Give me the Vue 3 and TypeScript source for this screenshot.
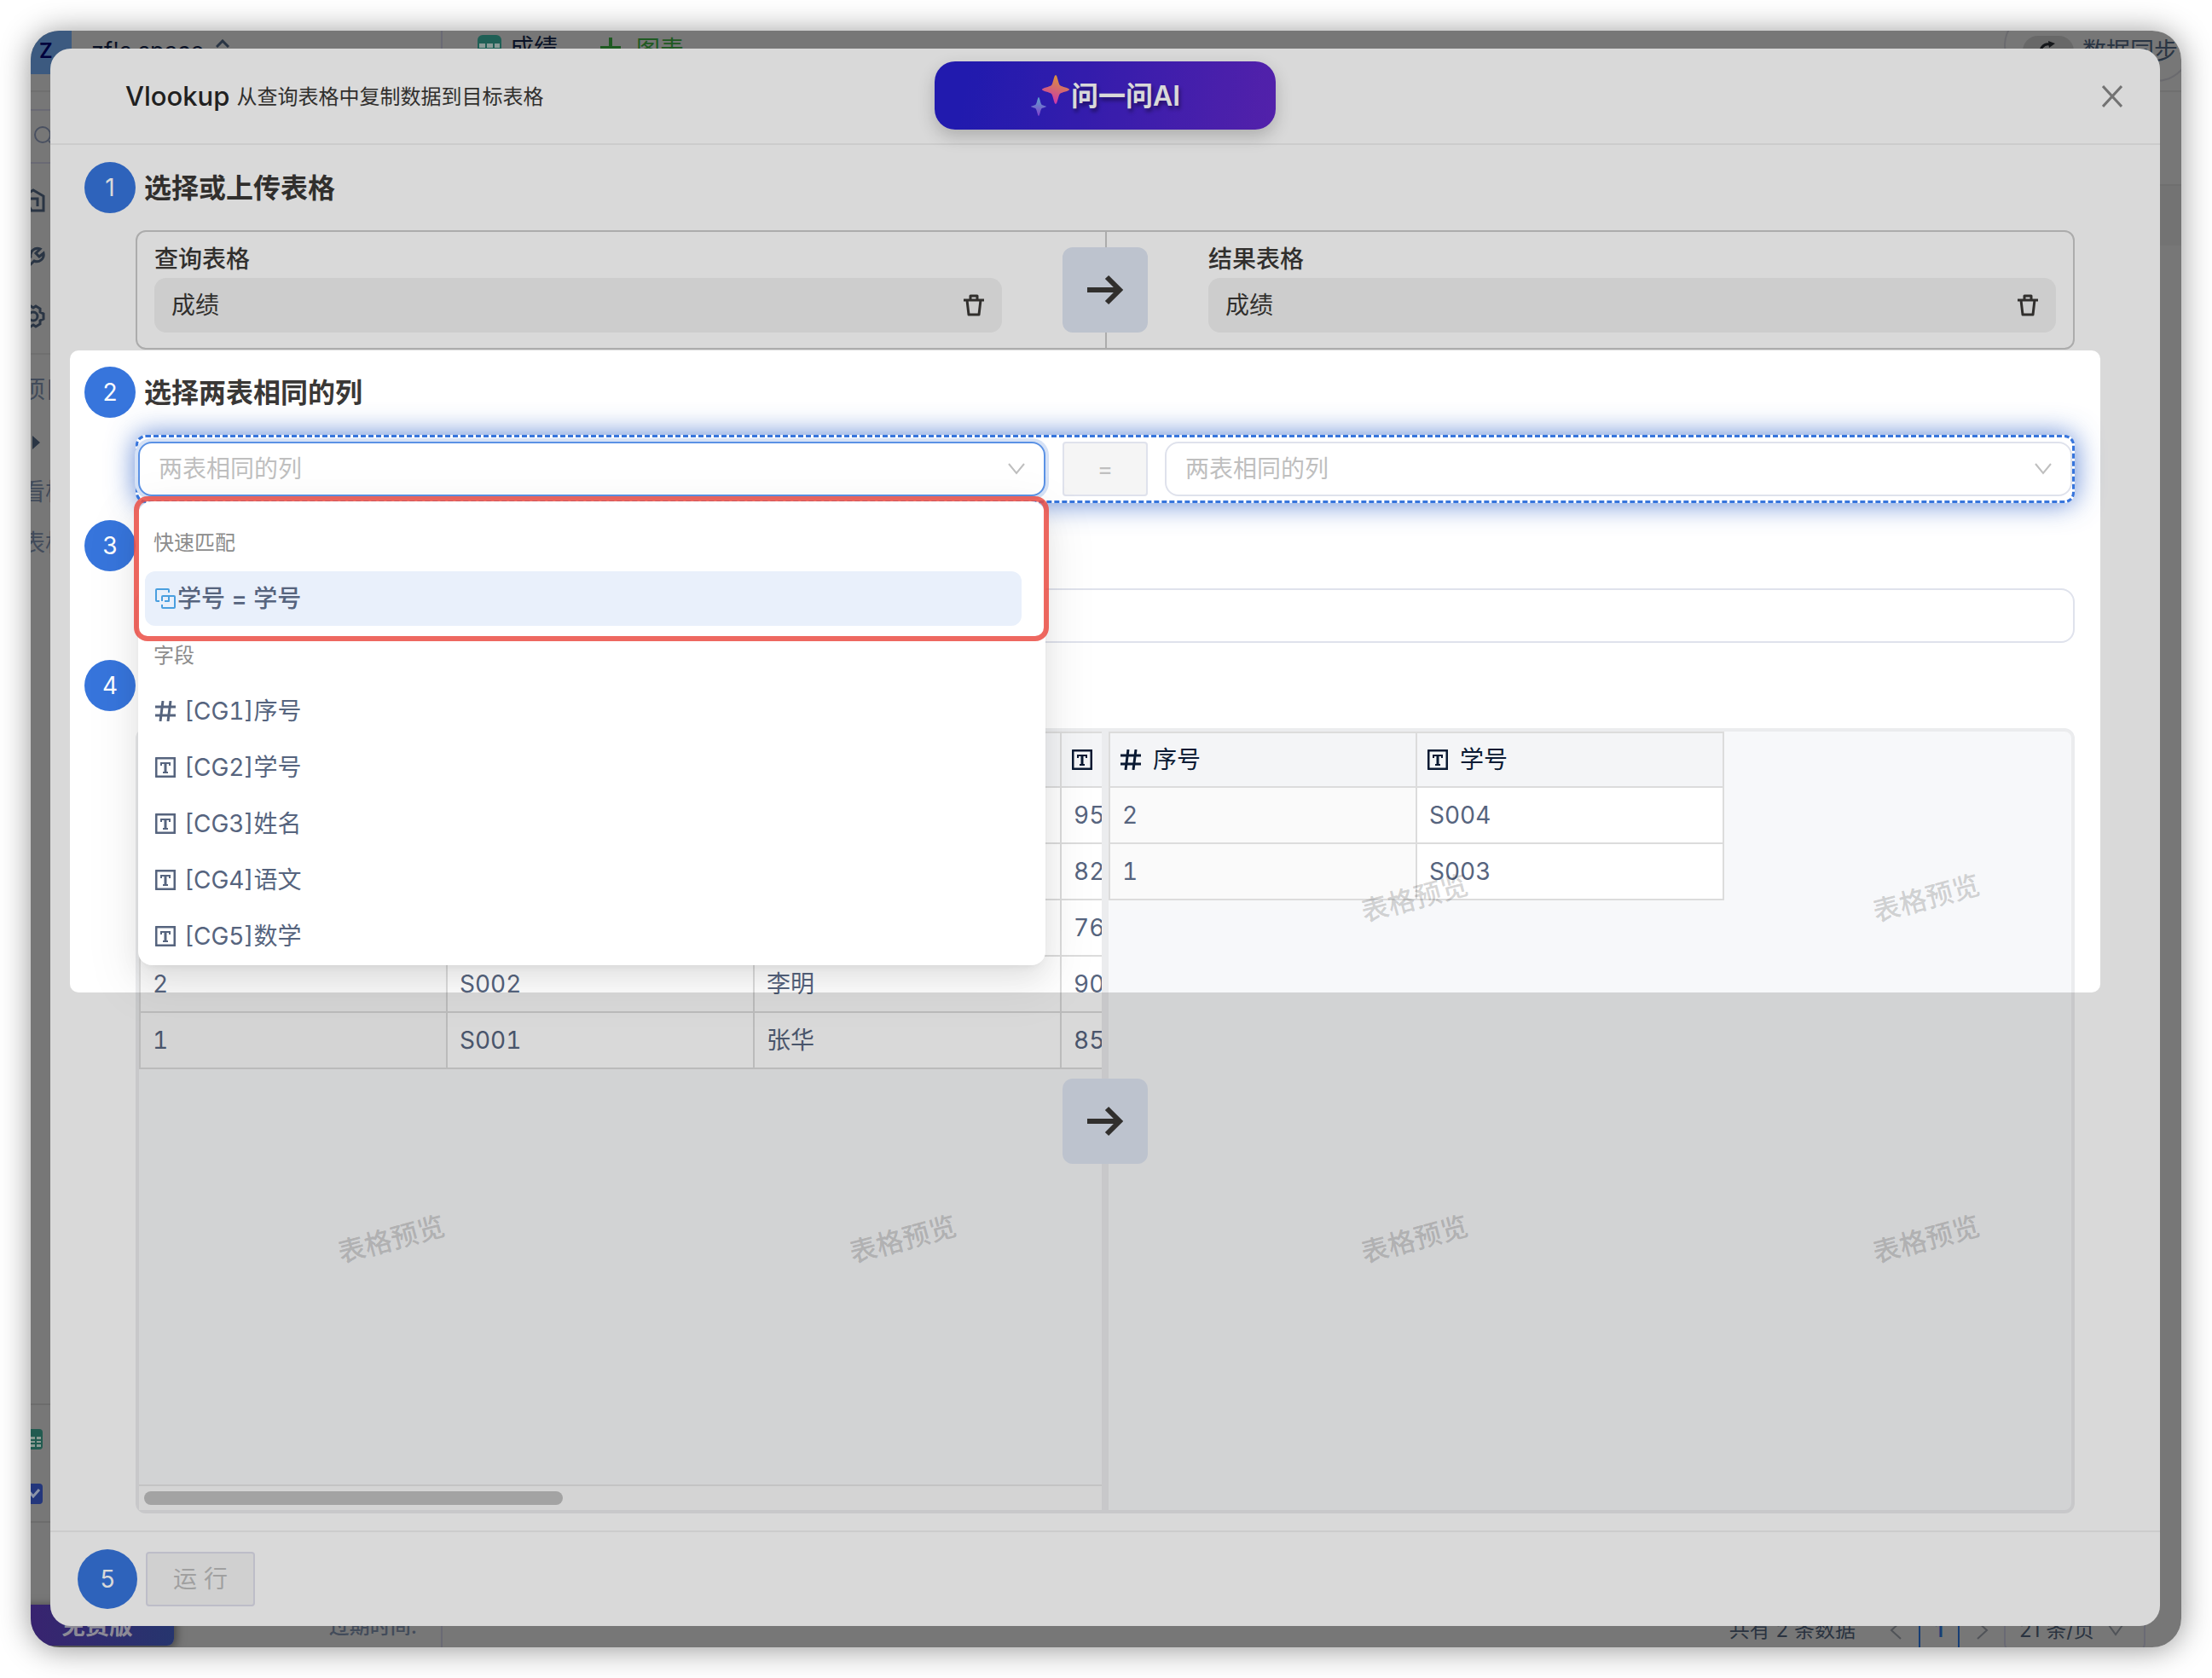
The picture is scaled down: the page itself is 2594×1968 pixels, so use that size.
<script setup lang="ts">
import { ref } from 'vue'

interface Field {
  id: string
  name: string
  kind: 'number' | 'text'
}

const fields: Field[] = [
  { id: 'CG1', name: '序号', kind: 'number' },
  { id: 'CG2', name: '学号', kind: 'text' },
  { id: 'CG3', name: '姓名', kind: 'text' },
  { id: 'CG4', name: '语文', kind: 'text' },
  { id: 'CG5', name: '数学', kind: 'text' },
]

const sourceRows: string[][] = [
  ['', '', '', '95'],
  ['', '', '', '82'],
  ['', '', '', '76'],
  ['2', 'S002', '李明', '90'],
  ['1', 'S001', '张华', '85'],
]

const targetRows: string[][] = [
  ['2', 'S004'],
  ['1', 'S003'],
]

const tables = [
  { label: '查询表格', value: '成绩' },
  { label: '结果表格', value: '成绩' },
]

const watermarks = [1, 2, 3, 4, 5, 6, 7, 8]
const target = ref('')
</script>

<template>
  <div class="stage">
    <div class="app">
      <div class="shell">
        <aside class="side">
          <div class="brand">
            <span class="logo">Z</span>
            <span class="space">zf's space</span>
            <svg class="caret" width="16" height="10" viewBox="0 0 16 10"><path d="M1 9 8 2l7 7" fill="none" stroke="#2a3544" stroke-width="3" /></svg>
          </div>
          <div class="search">
            <svg width="28" height="28" viewBox="0 0 28 28"><circle cx="12" cy="12" r="9" /><path d="m19 19 7 7" /></svg>
          </div>
          <nav class="tools">
            <svg width="28" height="28" viewBox="0 0 28 28"><path d="M2 26h5V12h12v9M12 26h14V9L14 2 2 9z" /></svg>
            <svg width="28" height="28" viewBox="0 0 28 28"><path d="M22 3a8 8 0 0 0-11 9L2 22l4 4 9-9a8 8 0 0 0 11-9l-5 4-4-4z" /></svg>
            <svg width="28" height="28" viewBox="0 0 28 28"><path d="m11 2 3 2 3-2 5 3v4l4 2v6l-4 2v4l-5 3-3-2-3 2-5-3v-4l-4-2v-6l4-2V5z" /><circle cx="14" cy="14" r="5" /></svg>
          </nav>
          <div class="tree">
            <span>项目</span>
            <span class="tri"></span>
            <span>看板</span>
            <span>表格</span>
          </div>
          <div class="apps">
            <span class="tile sheet"><svg width="26" height="24" viewBox="0 0 26 24"><path d="M3 9h21v12H3z" fill="#8a9a92" /><path d="M3 13h21M3 17h21M11 9v12M18 9v12" stroke="#225b50" stroke-width="2" /></svg></span>
            <span class="tile chart"><svg width="26" height="24" viewBox="0 0 26 24"><path d="m4 12 5-4 6 7 7-8" fill="none" stroke="#8b93a8" stroke-width="3" /></svg></span>
          </div>
          <div class="plan">
            <span class="badge">免费版</span>
            <span class="expire">过期时间:</span>
          </div>
        </aside>
        <main class="main">
          <div class="tabs">
            <svg class="tabicon" width="28" height="28" viewBox="0 0 28 28"><rect width="28" height="28" rx="6" fill="#1f5f55" /><path d="M2 10h7v5H2zM11 10h7v5h-7zM20 10h6v5h-6zM2 17h7v4H2zM11 17h7v4h-7zM20 17h6v4h-6z" fill="#8a9a96" /></svg>
            <span class="tab">成绩</span>
            <svg class="plus" width="28" height="28" viewBox="0 0 28 28"><path d="M14 2v24M2 14h24" stroke="#1f5a22" stroke-width="4" /></svg>
            <span class="newchart">图表</span>
            <div class="sync">
              <span class="spin"><svg width="24" height="24" viewBox="0 0 24 24"><path d="M4 17A9 9 0 0 1 14 4M21 11a9 9 0 0 1-9 10" fill="none" stroke="#16181b" stroke-width="3" /><path d="m12 0 8 3-7 5z" fill="#16181b" /></svg></span>
              <span>数据同步</span>
            </div>
          </div>
          <div class="toolbar"></div>
          <div class="subbar"></div>
          <div class="pager">
            <span class="total">共有 2 条数据</span>
            <svg width="14" height="24" viewBox="0 0 14 24"><path d="M13 2 2 12l11 10" fill="none" stroke="#505358" stroke-width="2" /></svg>
            <span class="page">1</span>
            <svg width="14" height="24" viewBox="0 0 14 24"><path d="m1 2 11 10L1 22" fill="none" stroke="#505358" stroke-width="2" /></svg>
            <span class="size">21 条/页<svg width="18" height="14" viewBox="0 0 18 14"><path d="m1 1 8 11 8-11" fill="none" stroke="#505358" stroke-width="2" /></svg></span>
          </div>
        </main>
      </div>

      <section class="modal" role="dialog" aria-labelledby="dialog-title">
        <header class="head">
          <h1 id="dialog-title">Vlookup</h1>
          <p>从查询表格中复制数据到目标表格</p>
          <button type="button" class="ask">
            <svg width="48" height="50" viewBox="0 0 48 50">
              <defs>
                <linearGradient id="warm" x1="0" y1="1" x2=".3" y2="0"><stop offset="0" stop-color="#ef2fe0" /><stop offset="1" stop-color="#ffa84c" /></linearGradient>
                <linearGradient id="cool" x1="0" y1="1" x2="0" y2="0"><stop offset="0" stop-color="#9a4df0" /><stop offset="1" stop-color="#6ec0f0" /></linearGradient>
              </defs>
              <path d="M30 1c2 0 3 10 5 12s11 3 11 5-9 3-11 5-3 12-5 12-3-10-5-12-11-3-11-5 9-3 11-5 3-12 5-12z" fill="url(#warm)" />
              <path d="M10 27c1 0 2 6 3 8s6 2 6 3-5 1-6 3-2 8-3 8-2-6-3-8-6-2-6-3 5-1 6-3 2-8 3-8z" fill="url(#cool)" />
            </svg>
            <span>问一问AI</span>
          </button>
          <button type="button" class="close" aria-label="关闭">
            <svg width="24" height="26" viewBox="0 0 24 26"><path d="m1 1 22 24M23 1 1 25" stroke="#888" stroke-width="3" /></svg>
          </button>
        </header>

        <div class="body">
          <div class="step"><span class="num">1</span><h2>选择或上传表格</h2></div>
          <div class="pick">
            <div v-for="(t, i) in tables" :key="i" class="side-pick">
              <h3>{{ t.label }}</h3>
              <div class="file">
                <span>{{ t.value }}</span>
                <button type="button" aria-label="删除">
                  <svg width="26" height="26" viewBox="0 0 26 26"><path d="M1 7h24M9 7V2h8v5M5 7l2 17h12l2-17" fill="none" stroke="#3a3836" stroke-width="3" stroke-linejoin="round" /></svg>
                </button>
              </div>
            </div>
            <div class="arrow">
              <svg width="44" height="36" viewBox="0 0 44 36"><path d="M1 18h38M24 3l15 15-15 15" fill="none" stroke="#3a3836" stroke-width="6" /></svg>
            </div>
          </div>

          <div class="step"><span class="num">2</span><h2>选择两表相同的列</h2></div>
          <div class="match">
            <div class="combo open">
              <select aria-label="查询表格列"><option>两表相同的列</option></select>
              <svg width="20" height="14" viewBox="0 0 20 14"><path d="m1 1 9 11 9-11" fill="none" stroke="#bfbfbf" stroke-width="2" /></svg>
              <div class="menu">
                <div class="quick"></div>
                <ul role="listbox" aria-label="字段列表">
                  <li class="group" role="presentation">快速匹配</li>
                  <li class="opt active" role="option" aria-selected="true">
                    <svg width="24" height="24" viewBox="0 0 24 24" fill="none" stroke="#4a9fdf" stroke-width="2" stroke-linejoin="round"><path d="M16 5V2a1 1 0 0 0-1-1H2a1 1 0 0 0-1 1v12a1 1 0 0 0 1 1h3M8 19v3a1 1 0 0 0 1 1h13a1 1 0 0 0 1-1V10a1 1 0 0 0-1-1H9a1 1 0 0 0-1 1v5M16 9v6h-5" /></svg>
                    <b>学号 = 学号</b>
                  </li>
                  <li class="group" role="presentation">字段</li>
                  <li v-for="f in fields" :key="f.id" class="opt" role="option">
                    <svg class="kind" width="24" height="24" viewBox="0 0 24 24" fill="none" stroke="currentColor" stroke-width="3">
                      <path v-if="f.kind === 'number'" d="M9 0 6 24M18 0l-3 24M0 7h24M0 17h24" />
                      <template v-else><rect x="1" y="1" width="22" height="22" rx="1" /><path d="M7 10V7h10v3M9 18h6" stroke-width="2" /><path d="M12 7v10" /></template>
                    </svg>
                    <span>[{{ f.id }}]{{ f.name }}</span>
                  </li>
                </ul>
              </div>
            </div>
            <span class="equals">=</span>
            <div class="combo">
              <select aria-label="结果表格列"><option>两表相同的列</option></select>
              <svg width="20" height="14" viewBox="0 0 20 14"><path d="m1 1 9 11 9-11" fill="none" stroke="#bfbfbf" stroke-width="2" /></svg>
            </div>
          </div>

          <div class="step"><span class="num">3</span></div>
          <input v-model="target" class="target" type="text" aria-label="目标列" />

          <div class="step"><span class="num">4</span></div>
          <div class="preview">
            <div class="pane">
              <div class="scroll">
                <table class="wide">
                  <thead>
                    <tr>
                      <th></th><th></th><th></th>
                      <th><div><svg width="24" height="24" viewBox="0 0 24 24" fill="none" stroke="currentColor" stroke-width="3"><rect x="1" y="1" width="22" height="22" rx="1" /><path d="M7 10V7h10v3M9 18h6" stroke-width="2" /><path d="M12 7v10" /></svg></div></th>
                    </tr>
                  </thead>
                  <tbody>
                    <tr v-for="(r, i) in sourceRows" :key="i"><td v-for="(c, j) in r" :key="j">{{ c }}</td></tr>
                  </tbody>
                </table>
              </div>
              <div class="bar"><div class="thumb"></div></div>
            </div>
            <div class="gutter"></div>
            <div class="pane">
              <table>
                <thead>
                  <tr>
                    <th><div><svg width="24" height="24" viewBox="0 0 24 24" fill="none" stroke="currentColor" stroke-width="3"><path d="M9 0 6 24M18 0l-3 24M0 7h24M0 17h24" /></svg>序号</div></th>
                    <th><div><svg width="24" height="24" viewBox="0 0 24 24" fill="none" stroke="currentColor" stroke-width="3"><rect x="1" y="1" width="22" height="22" rx="1" /><path d="M7 10V7h10v3M9 18h6" stroke-width="2" /><path d="M12 7v10" /></svg>学号</div></th>
                  </tr>
                </thead>
                <tbody>
                  <tr v-for="(r, i) in targetRows" :key="i"><td v-for="(c, j) in r" :key="j">{{ c }}</td></tr>
                </tbody>
              </table>
            </div>
            <div class="marks" aria-hidden="true"><span v-for="m in watermarks" :key="m">表格预览</span></div>
            <div class="arrow">
              <svg width="44" height="36" viewBox="0 0 44 36"><path d="M1 18h38M24 3l15 15-15 15" fill="none" stroke="#3a3836" stroke-width="6" /></svg>
            </div>
          </div>
        </div>

        <footer class="foot">
          <span class="num big">5</span>
          <button type="button" class="run" disabled>运 行</button>
        </footer>
        <div class="spotlight"></div>
      </section>
    </div>
  </div>
</template>

<style>
body {
  background: #fff;
}
</style>

<style scoped>
* {
  box-sizing: border-box;
  margin: 0;
  padding: 0;
}
.stage {
  padding: 36px;
  height: 100vh;
  min-height: 1400px;
  font: 28px/40px Inter, "Noto Sans CJK SC", sans-serif;
  color: #3a3836;
}
button,
select,
input {
  font: inherit;
  color: inherit;
}
button {
  border: 0;
  background: none;
}
svg {
  display: block;
  flex: none;
}
.app {
  position: relative;
  height: 100%;
  overflow: hidden;
  border-radius: 34px;
  background: #777;
}
.stage::before {
  content: "";
  position: absolute;
  inset: 36px;
  border-radius: 34px;
  box-shadow: 0 2px 36px rgba(0, 0, 0, 0.42);
}

/* workspace behind the dialog */
.shell {
  display: flex;
  height: 100%;
  margin-left: -16px;
  color: #424b5a;
  white-space: nowrap;
}
.side {
  display: flex;
  flex-direction: column;
  width: 499px;
  border-right: 2px solid #6a6a74;
}
.brand {
  display: flex;
  height: 72px;
  border-bottom: 2px solid #6f6f6f;
  color: #0a1226;
}
.logo {
  width: 64px;
  height: 51px;
  padding: 4px 0 0 26px;
  border-radius: 0 0 6px 0;
  background: #3c5a80;
  color: #00003c;
  font-size: 24px;
  line-height: 40px;
  font-weight: 600;
}
.space {
  margin: 4px 14px 0 23px;
  font-size: 27px;
}
.caret {
  margin-top: 10px;
}
.search {
  display: flex;
  align-items: center;
  height: 64px;
  margin-top: 20px;
  padding-left: 18px;
  border: solid #6a6a74;
  border-width: 2px 0;
}
.search svg,
.tools svg {
  fill: none;
  stroke: #4a5161;
  stroke-width: 2;
}
.tools {
  display: flex;
  flex-direction: column;
  gap: 40px;
  padding: 29px 4px 29px 5px;
  border-bottom: 2px solid #6f6f6f;
}
.tools svg {
  stroke: #2a3544;
  stroke-width: 3;
}
.tree {
  display: flex;
  flex: 1;
  flex-direction: column;
  padding: 11px 5px;
}
.tree span {
  line-height: 60px;
}
.tree .tri {
  width: 9px;
  height: 16px;
  margin: 24px 0 20px 13px;
  background: #2a3544;
  clip-path: polygon(0 0, 100% 50%, 0 100%);
}
.apps {
  display: flex;
  flex-direction: column;
  gap: 40px;
  padding: 28px 4px 20px;
  border: solid #6c6c6c;
  border-width: 2px 0;
}
.tile {
  width: 26px;
  height: 24px;
  overflow: hidden;
  border-radius: 4px;
}
.sheet {
  background: #225b50;
}
.chart {
  background: #23367c;
}
.plan {
  display: flex;
  align-items: center;
  justify-content: space-between;
  height: 50px;
  margin-top: 96px;
  padding-right: 28px;
  font-size: 24px;
}
.badge {
  width: 184px;
  height: 48px;
  margin-bottom: 2px;
  padding-left: 52px;
  border-radius: 0 0 8px 0;
  background: linear-gradient(90deg, #3a2270, #26356e);
  box-shadow: 2px 2px 12px rgba(0, 0, 0, 0.5);
  color: #8c8a96;
  font-size: 28px;
  font-weight: 600;
  line-height: 50px;
}
.expire {
  padding-top: 2px;
  font-weight: 500;
}
.main {
  display: flex;
  flex: 1;
  flex-direction: column;
}
.tabs {
  display: flex;
  height: 72px;
  border-bottom: 2px solid #6f6f6f;
  color: #0a1226;
}
.tabicon {
  margin: 5px 10px 0 41px;
}
.plus {
  margin: 6px 16px 0 48px;
}
.newchart {
  padding-top: 2px;
  color: #1f5a22;
}
.sync {
  display: flex;
  align-items: center;
  width: 220px;
  height: 84px;
  margin: -24px -12px 0 auto;
  padding: 12px 0 0 20px;
  border: 2px solid #6a6a6e;
  border-radius: 42px;
  color: #2a3544;
}
.spin {
  display: flex;
  align-items: center;
  justify-content: center;
  width: 60px;
  height: 36px;
  margin-right: 10px;
  border-radius: 18px;
  background: #686868;
}
.toolbar {
  height: 110px;
  border-bottom: 2px solid #6f6f6f;
}
.subbar {
  flex: 1;
  background: linear-gradient(#737373 70px, #777 70px);
}
.pager {
  display: flex;
  align-items: center;
  justify-content: flex-end;
  gap: 20px;
  height: 42px;
  padding: 2px 42px 0 0;
  color: #2a3340;
  font-size: 24px;
}
.total {
  margin-right: 20px;
}
.page {
  width: 48px;
  height: 64px;
  border: 2px solid #173e75;
  color: #173e75;
  font-weight: 600;
  line-height: 60px;
  text-align: center;
}
.size {
  display: flex;
  align-items: center;
  justify-content: space-between;
  width: 166px;
  height: 54px;
  margin-left: -2px;
  padding: 0 24px 0 16px;
  border: 2px solid #6a6a74;
  border-radius: 12px;
}

/* dialog */
.modal {
  position: absolute;
  inset: 21px 25px 25px 23px;
  display: flex;
  flex-direction: column;
  overflow: hidden;
  border-radius: 24px;
  background: #fff;
}
.head {
  position: relative;
  display: flex;
  align-items: center;
  gap: 8px;
  height: 113px;
  padding: 0 44px 0 88px;
  border-bottom: 2px solid #f0f0f0;
}
.head h1 {
  color: #262626;
  font-size: 31px;
  font-weight: 500;
}
.head p {
  padding-top: 2px;
  font-size: 24px;
}
.ask {
  position: absolute;
  left: 50%;
  top: 15px;
  display: flex;
  align-items: center;
  justify-content: center;
  width: 400px;
  height: 80px;
  margin-left: -200px;
  border-radius: 24px;
  background: linear-gradient(100deg, #271fcd 10%, #6227c8);
  box-shadow: 0 8px 20px rgba(0, 0, 0, 0.2);
  color: #fff;
  font-size: 32px;
  font-weight: 600;
  text-shadow: 2px 4px 4px rgba(0, 0, 0, 0.4);
}
.ask span {
  padding-top: 2px;
}
.close {
  margin-left: auto;
}
.body {
  display: flex;
  flex: 1;
  flex-direction: column;
  gap: 20px;
  min-height: 0;
  padding: 20px 100px 20px 40px;
}
.step {
  display: flex;
  align-items: center;
  gap: 10px;
}
.num {
  width: 60px;
  height: 60px;
  border-radius: 50%;
  background: #3775dc;
  color: #fff;
  line-height: 60px;
  text-align: center;
}
.num.big {
  width: 70px;
  height: 70px;
  line-height: 70px;
}
.step h2 {
  padding-top: 2px;
  font-size: 32px;
  font-weight: 600;
}
.pick,
.match,
.target,
.preview {
  margin-left: 60px;
}
.pick {
  position: relative;
  display: flex;
  gap: 242px;
  height: 140px;
  padding: 10px 20px 18px;
  border: 2px solid #cacaca;
  border-radius: 12px;
}
.pick::before {
  content: "";
  position: absolute;
  inset: 0 50%;
  width: 2px;
  background: #cacaca;
}
.side-pick {
  flex: 1;
}
.side-pick h3 {
  font-size: 28px;
  font-weight: 500;
  line-height: 44px;
}
.file {
  display: flex;
  align-items: center;
  justify-content: space-between;
  height: 64px;
  padding: 0 20px;
  border-radius: 14px;
  background: #f1f1f1;
}
.arrow {
  position: absolute;
  left: 50%;
  top: 50%;
  display: flex;
  align-items: center;
  justify-content: center;
  width: 100px;
  height: 100px;
  margin: -50px 0 0 -50px;
  border-radius: 12px;
  background: #dee5f2;
}
.match {
  display: grid;
  grid-template-columns: 1fr 100px 1fr;
  gap: 20px;
  padding: 5px 0;
  border: 3px dashed #3775dc;
  border-radius: 12px;
  box-shadow: 0 0 32px rgba(50, 100, 200, 0.8);
  background: #fff;
}
.combo {
  position: relative;
}
.combo > svg {
  position: absolute;
  right: 24px;
  top: 25px;
  pointer-events: none;
}
.combo select {
  display: block;
  width: 100%;
  height: 64px;
  padding: 0 22px;
  appearance: none;
  border: 2px solid #dfe2ec;
  border-radius: 16px;
  background: #fff;
  color: #bfbfbf;
  opacity: 1;
}
.combo.open select {
  border-color: #5b92e5;
  box-shadow: 0 0 0 4px #d6e2f6;
}
.equals {
  border: 2px solid #dfe2ec;
  border-radius: 4px;
  background: #f5f5f5;
  color: #bfbfbf;
  line-height: 60px;
  text-align: center;
}
.menu {
  position: absolute;
  left: 0;
  top: 70px;
  z-index: 3;
  width: 100%;
  padding: 16px 28px 2px 8px;
  border-radius: 16px;
  background: #fff;
  box-shadow: 0 12px 32px rgba(0, 0, 0, 0.08), 0 6px 12px -8px rgba(0, 0, 0, 0.12),
    0 18px 56px 16px rgba(0, 0, 0, 0.05);
}
.quick {
  position: absolute;
  inset: -6px -4px auto -5px;
  height: 170px;
  border: 6px solid rgba(235, 78, 68, 0.85);
  border-radius: 16px;
}
.menu ul {
  list-style: none;
  font-variant-numeric: tabular-nums;
}
.group {
  height: 66px;
  padding-left: 10px;
  color: #8c8c8c;
  font-size: 24px;
  line-height: 66px;
}
.opt {
  display: flex;
  align-items: center;
  height: 64px;
  margin-bottom: 2px;
  padding-left: 12px;
  border-radius: 12px;
  color: #56647e;
}
.opt:last-child {
  margin-bottom: 0;
}
.opt.active {
  background: #e9f0fb;
}
.opt b {
  margin-left: 2px;
  font-weight: 500;
}
.kind {
  margin-right: 10px;
}
.target {
  height: 64px;
  padding: 0 22px;
  border: 2px solid #dfe2ec;
  border-radius: 16px;
  background: #fff;
  outline: none;
}
.preview {
  position: relative;
  display: flex;
  flex: 1;
  min-height: 0;
  border: 4px solid #ebecee;
  border-radius: 12px;
  background: #f7f8fa;
}
.pane {
  display: flex;
  flex: 1 1 0;
  flex-direction: column;
  min-width: 0;
  overflow: hidden;
}
.gutter {
  width: 8px;
  background: #ebecee;
}
.scroll {
  flex: 1;
  overflow: hidden;
}
.bar {
  height: 30px;
  padding: 6px;
  border-top: 2px solid #e6e6e6;
  background: #fafafa;
}
.thumb {
  width: 44%;
  height: 16px;
  border-radius: 8px;
  background: #c0c0c0;
}
table {
  width: 722px;
  table-layout: fixed;
  border-spacing: 0;
  border: solid #dcdcdc;
  border-width: 2px 0 0 2px;
  font-variant-numeric: tabular-nums;
}
table.wide {
  width: 1442px;
}
th,
td {
  height: 66px;
  padding: 0 14px;
  border: solid #dcdcdc;
  border-width: 0 2px 2px 0;
  background: #fff;
  color: #56647e;
  font-weight: 400;
  text-align: left;
}
td:first-child {
  background: #fafafa;
}
th {
  height: 64px;
  padding: 0 12px;
  background: #f4f5f7;
  color: #0a1a33;
}
th div {
  display: flex;
  align-items: center;
  gap: 14px;
}
.marks {
  position: absolute;
  inset: 0;
  display: grid;
  grid-template-columns: repeat(4, 600px);
  grid-auto-rows: 400px;
  overflow: hidden;
  pointer-events: none;
}
.marks span {
  display: flex;
  align-items: center;
  justify-content: center;
  width: 592px;
  height: 392px;
  color: rgba(0, 0, 0, 0.18);
  font-size: 32px;
  font-weight: 500;
  transform: rotate(-15deg);
}
.foot {
  display: flex;
  align-items: center;
  gap: 10px;
  height: 112px;
  padding: 0 32px;
  border-top: 2px solid #f0f0f0;
}
.run {
  width: 128px;
  height: 64px;
  border: 2px solid #dfdfec;
  border-radius: 4px;
  background: #f5f5f5;
  color: #bdbdbd;
}

/* guided-tour mask: everything but the current step is dimmed */
.spotlight {
  position: absolute;
  inset: 354px 70px auto 23px;
  z-index: 4;
  height: 753px;
  border-radius: 10px;
  box-shadow: 0 0 0 3000px rgba(0, 0, 0, 0.15);
  pointer-events: none;
}
</style>
